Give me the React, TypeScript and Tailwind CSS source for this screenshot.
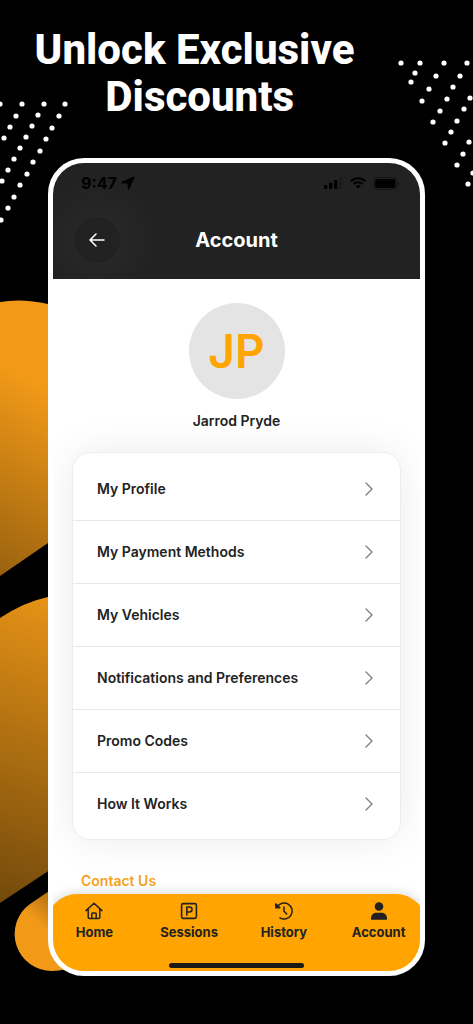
import type { ReactNode } from "react";

const menuItems = [
  "My Profile",
  "My Payment Methods",
  "My Vehicles",
  "Notifications and Preferences",
  "Promo Codes",
  "How It Works",
];

const leftDots = [
  [65, 104], [59, 116], [52, 128], [46, 139], [40, 151], [33, 162], [27, 174], [20, 185], [14, 197], [8, 208], [1, 220],
  [44, 104], [38, 115], [32, 126], [26, 137], [20, 148], [14, 159], [8, 170], [2, 181],
  [22, 104], [16, 116], [10, 127], [4, 138], [0, 104],
];

const rightDots = [
  [28, 63], [47, 63], [42, 73], [38, 82],
  [71, 63], [63, 76], [56, 89], [49, 101],
  [94, 63], [87, 76], [80, 87], [74, 99], [67, 111], [60, 122],
  [97, 98], [91, 109], [84, 121], [78, 132], [72, 143],
  [96, 142], [90, 154], [84, 165], [100, 173], [95, 184],
];

function Backdrop() {
  return (
    <>
      <svg className="absolute left-0 top-0" width="120" height="1024" viewBox="0 0 120 1024" aria-hidden="true">
        <defs>
          <linearGradient id="blobTop" gradientUnits="userSpaceOnUse" x1="40" y1="385" x2="-80" y2="600">
            <stop offset="0" stopColor="#f29a18" />
            <stop offset="1" stopColor="#7d500c" />
          </linearGradient>
          <linearGradient id="blobMid" gradientUnits="userSpaceOnUse" x1="70" y1="590" x2="-40" y2="910">
            <stop offset="0" stopColor="#ec9617" />
            <stop offset="1" stopColor="#6b450b" />
          </linearGradient>
          <linearGradient id="blobLow" gradientUnits="userSpaceOnUse" x1="56" y1="894" x2="34" y2="920">
            <stop offset="0" stopColor="#a86b11" />
            <stop offset="1" stopColor="#f29a18" />
          </linearGradient>
        </defs>
        <path d="M0 302 Q22 298 48 304 L80 315 V521 L0 576 Z" fill="url(#blobTop)" />
        <path d="M0 618 Q24 602 48 597 L80 595 V850 L0 903 Z" fill="url(#blobMid)" />
        <path d="M52 971 A37 37 0 0 1 30 904 L80 870 V964 Q66 971 52 971 Z" fill="url(#blobLow)" />
        {leftDots.map(([x, y]) => (
          <circle key={`${x}-${y}`} cx={x} cy={y} r="2.6" fill="#fff" />
        ))}
      </svg>
      <svg className="absolute right-0 top-0" width="100" height="200" viewBox="0 0 100 200" aria-hidden="true">
        {rightDots.map(([x, y]) => (
          <circle key={`${x}-${y}`} cx={x} cy={y} r="2.6" fill="#fff" />
        ))}
      </svg>
    </>
  );
}

function StatusBar() {
  return (
    <div className="flex h-10 items-center justify-between pl-7 pr-5 text-black">
      <div className="flex items-center gap-1">
        <span className="text-base font-bold">9:47</span>
        <svg width="14" height="14" viewBox="0 0 14 14" fill="currentColor" aria-hidden="true">
          <path d="M12.6.5 1 5.7c-1 .5-.8 1.7.4 1.7h4.900c.2 0 .3.1.3.300v4.900c0 1.200 1.300 1.400 1.800.4L13.500 1.400c.3-.7-.2-1.200-.9-.9Z" />
        </svg>
      </div>
      <div className="flex items-center gap-[7px]">
        <svg width="19" height="12" viewBox="0 0 19 12" fill="currentColor" aria-hidden="true">
          <rect x="0" y="8" width="3.300" height="4" rx="1" />
          <rect x="5" y="5.500" width="3.300" height="6.500" rx="1" />
          <rect x="10" y="3" width="3.300" height="9" rx="1" />
          <rect x="15" y="0" width="3.300" height="12" rx="1" opacity=".2" />
        </svg>
        <svg width="16" height="12" viewBox="0 0 16 12" fill="none" stroke="currentColor" strokeWidth="2" aria-hidden="true">
          <path d="M.8 4.200a10.300 10.300 0 0 1 14.400 0M3.500 7a6.400 6.400 0 0 1 9 0" />
          <path d="M5.700 9.300a3.200 3.200 0 0 1 4.600 0L8 11.800Z" fill="currentColor" stroke="none" />
        </svg>
        <svg width="27" height="13" viewBox="0 0 27 13" aria-hidden="true">
          <rect x=".5" y=".5" width="23.500" height="12" rx="3.800" fill="none" stroke="#000" opacity=".4" />
          <rect x="2" y="2" width="20.500" height="9" rx="2.300" />
          <path d="M25.200 4.500c1.700.6 1.700 3.400 0 4Z" opacity=".4" />
        </svg>
      </div>
    </div>
  );
}

function HomeIcon() {
  return (
    <svg width="18" height="18" viewBox="0 0 18 18" fill="none" stroke="currentColor" strokeWidth="1.500" strokeLinecap="round" strokeLinejoin="round" aria-hidden="true">
      <path d="M1 8.600 9 1.300l8 7.300M3.200 7v8.200c0 .8.500 1.300 1.300 1.300h9c.8 0 1.300-.5 1.300-1.300V7" />
      <path d="M6.800 16.300v-4.500c0-.5.300-.8.800-.8h2.800c.5 0 .8.300.8.800v4.500" />
    </svg>
  );
}

function ParkingIcon() {
  return (
    <svg width="18" height="18" viewBox="0 0 18 18" fill="none" stroke="currentColor" strokeWidth="1.600" strokeLinecap="round" strokeLinejoin="round" aria-hidden="true">
      <rect x="1.600" y="1.600" width="14.800" height="14.800" rx="1.600" />
      <path d="M6.800 13V5h2.700a2.500 2.500 0 0 1 0 5H6.800" />
    </svg>
  );
}

function HistoryIcon() {
  return (
    <svg width="18" height="18" viewBox="0 0 18 18" fill="none" stroke="currentColor" strokeWidth="1.500" strokeLinecap="round" strokeLinejoin="round" aria-hidden="true">
      <path d="M2.200 5A8 8 0 1 1 5 15.900" />
      <path d="M.8 1.900v3.800h4Z" fill="currentColor" />
      <path d="M9 5v4.300l2.700 2.700" />
    </svg>
  );
}

function PersonIcon() {
  return (
    <svg width="18" height="18" viewBox="0 0 18 18" fill="currentColor" aria-hidden="true">
      <circle cx="9" cy="4.500" r="4.300" />
      <path d="M1 17.700c-.4-4.500 2.200-7 5.500-7h5c3.300 0 5.900 2.500 5.500 7Z" />
    </svg>
  );
}

function Tab({ label, children }: { label: string; children: ReactNode }) {
  return (
    <a href="#" className="flex flex-1 flex-col items-center gap-1 text-[13px] font-bold leading-4">
      {children}
      {label}
    </a>
  );
}

export default function App() {
  return (
    <div className="relative min-h-screen overflow-hidden bg-black pb-12 font-['Inter',sans-serif] text-[#222222]">
      <Backdrop />
      <h1 className="relative pr-21 pt-[26px] text-center font-['Roboto',sans-serif] text-[42px] font-extrabold leading-[47px] text-white">
        Unlock Exclusive
        <br />
        &nbsp;Discounts
      </h1>

      <div className="relative mx-12 mt-[38px] overflow-hidden rounded-[36px] border-5 border-white bg-white">
        <header className="bg-[#222222] text-white">
          <StatusBar />
          <div className="grid h-19 grid-cols-[46px_1fr_46px] items-center px-[21px] pb-0.5">
            <button
              type="button"
              aria-label="Back"
              className="flex size-[46px] items-center justify-center rounded-full bg-[#222222] shadow-[0_0_60px_rgba(255,255,255,0.12)]"
            >
              <svg width="16" height="14" viewBox="0 0 16 14" fill="none" stroke="currentColor" strokeWidth="1.500" strokeLinecap="round" strokeLinejoin="round" aria-hidden="true">
                <path d="M15 7H1M7 1 1 7l6 6" />
              </svg>
            </button>
            <h2 className="text-center text-xl font-bold">Account</h2>
          </div>
        </header>

        <main>
          <div className="flex flex-col items-center pt-6">
            <div className="flex size-24 items-center justify-center rounded-full bg-[#e4e4e4] text-[46px] font-semibold text-[#ffa400]">
              JP
            </div>
            <p className="mt-3 text-sm font-semibold leading-5">Jarrod Pryde</p>
          </div>

          <ul className="mx-[19px] mt-[21px] divide-y divide-[#e8e8e8] rounded-[18px] border border-[#ececec] bg-white pb-1 pt-[5px] shadow-[0_0_40px_rgba(0,0,0,0.08)]">
            {menuItems.map((item) => (
              <li key={item}>
                <a href="#" className="flex h-[62px] items-center justify-between px-6 text-sm font-semibold">
                  {item}
                  <svg className="mr-0.5" width="10" height="14" viewBox="0 0 10 14" fill="none" stroke="#808080" strokeWidth="1.400" strokeLinecap="round" strokeLinejoin="round" aria-hidden="true">
                    <path d="m2 1 6 6-6 6" />
                  </svg>
                </a>
              </li>
            ))}
          </ul>

          <a href="#" className="ml-7 mt-[31px] block text-sm font-semibold leading-5 text-[#f5a31a]">
            Contact Us
          </a>
        </main>

        <nav className="relative -mx-1.5 mt-[3px] rounded-t-[30px] bg-[#ffa400] pb-[3px] pt-2 shadow-[0_0_12px_rgba(0,0,0,0.18)]">
          <div className="flex">
            <Tab label="Home"><HomeIcon /></Tab>
            <Tab label="Sessions"><ParkingIcon /></Tab>
            <Tab label="History"><HistoryIcon /></Tab>
            <Tab label="Account"><PersonIcon /></Tab>
          </div>
          <div className="mx-auto mt-[23px] h-[5px] w-[135px] rounded-full bg-[#1c1a16]" />
        </nav>
      </div>
    </div>
  );
}
